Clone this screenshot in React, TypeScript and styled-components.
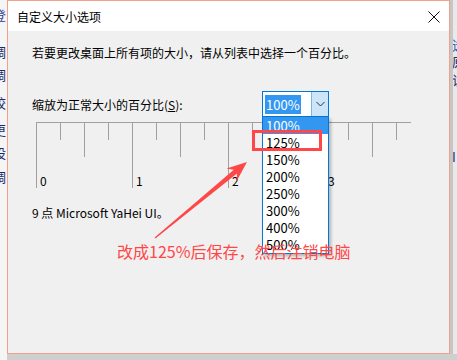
import React from 'react'
import styled, { createGlobalStyle } from 'styled-components'

const GlobalStyle = createGlobalStyle`
   html, body {
      margin: 0;
      padding: 0;
      background: #e6e6e6;
   }
   body {
      font-family: 'Noto Sans CJK SC', 'Noto Sans', sans-serif;
      color: #000;
   }
`

const RED = '#ff4747'
const BLUE = '#0078d7'

const Screen = styled.div`
   position: relative;
   display: flex;
   width: 457px;
   height: 360px;
   overflow: hidden;
   background: #cfcfcf;
`

const SideStrip = styled.div<{ $side: 'left' | 'right' }>`
   position: relative;
   flex: ${(p) => (p.$side === 'left' ? '0 0 7px' : '1 1 auto')};
   height: ${(p) => (p.$side === 'left' ? '360px' : '354px')};
   overflow: hidden;
   background: ${(p) => (p.$side === 'left' ? '#f5f5f5' : '#e9e9e9')};
   border-left: ${(p) => (p.$side === 'right' ? '3px solid #c6c6c6' : 'none')};
`

// fragments of the window lying behind the dialog
const BehindGlyph = styled.span<{ $y: number; $x: number; $color: string }>`
   position: absolute;
   top: ${(p) => p.$y}px;
   left: ${(p) => p.$x}px;
   font-size: 13px;
   line-height: 16px;
   color: ${(p) => p.$color};
   white-space: nowrap;
`

const Window = styled.div`
   flex: 0 0 443px;
   height: 354px;
   box-sizing: border-box;
   display: flex;
   flex-direction: column;
   border: 1px solid #f2a08a;
   background: #f0f0f0;
`

const TitleBar = styled.div`
   height: 30px;
   flex: 0 0 30px;
   display: flex;
   align-items: center;
   justify-content: space-between;
   padding: 0 9px;
   background: #fff;
   font-size: 12px;
`

const CloseButton = styled.div`
   display: flex;
   align-items: center;
   justify-content: center;
   width: 13px;
   height: 13px;
   margin-top: 1px;
`

const Body = styled.div`
   flex: 1;
   padding: 14px 0 0 24px;
   font-size: 12px;
   line-height: 16px;
`

const Intro = styled.div`
   height: 16px;
`

const Row = styled.div`
   display: flex;
   align-items: center;
   height: 26px;
   margin-top: 30px;
`

const Label = styled.div`
   width: 230px;
   margin-top: 1px;
`

const Combo = styled.div`
   position: relative;
   width: 67px;
   height: 26px;
   box-sizing: border-box;
   display: flex;
   border: 1px solid ${BLUE};
   background: #fff;
`

const ComboValue = styled.div`
   flex: 1;
   display: flex;
   align-items: center;
   padding-left: 2px;
`

const Selected = styled.span`
   display: inline-block;
   height: 19px;
   line-height: 19px;
   padding: 0 1px;
   font-size: 13px;
   background: #3397f2;
   color: #fff;
`

const DropButton = styled.div`
   width: 16px;
   display: flex;
   align-items: center;
   justify-content: center;
   background: #cde5f8;
   border-left: 1px solid #7fb6e6;
`

const DropList = styled.ul`
   position: absolute;
   top: 25px;
   left: -1px;
   width: 67px;
   box-sizing: border-box;
   margin: 0;
   padding: 0;
   list-style: none;
   background: #fff;
   border: 1px solid ${BLUE};
   border-top: none;
   box-shadow: 2px 2px 3px rgba(0, 0, 0, 0.25);
   z-index: 2;
`

const DropItem = styled.li<{ $active?: boolean }>`
   height: 17px;
   line-height: 17px;
   padding-left: 3px;
   font-size: 13px;
   background: ${(p) => (p.$active ? '#3397f2' : 'transparent')};
   color: ${(p) => (p.$active ? '#fff' : '#000')};
`

const RulerBox = styled.div`
   width: 375px;
   height: 70px;
   margin: 5px 0 0 4px;
`

const FontNote = styled.div`
   margin-top: 13px;
   font-size: 12px;
`

const Overlay = styled.div`
   position: absolute;
   inset: 0;
   pointer-events: none;
   z-index: 5;
`

const Highlight = styled.div`
   position: absolute;
   left: 252px;
   top: 130px;
   width: 70px;
   height: 21px;
   box-sizing: border-box;
   border: 3px solid ${RED};
`

const Note = styled.div`
   position: absolute;
   left: 117px;
   top: 241px;
   font-size: 16px;
   line-height: 20px;
   color: ${RED};
   white-space: nowrap;
`

const leftGlyphs = [
   { y: 7, ch: '登', color: '#2a3f8f' },
   { y: 44, ch: '调', color: '#1b2a6b' },
   { y: 67, ch: '调', color: '#1b2a6b' },
   { y: 95, ch: '校', color: '#1b2a6b' },
   { y: 122, ch: '更', color: '#1b2a6b' },
   { y: 145, ch: '设', color: '#1b2a6b' },
   { y: 169, ch: '调', color: '#1b2a6b' },
]

const rightGlyphs = [
   { y: 37, ch: '选', color: '#1f5fc0' },
   { y: 54, ch: '原', color: '#1b2a6b' },
   { y: 72, ch: '访', color: '#1b2a6b' },
   { y: 149, ch: 'I', color: '#1b2a6b' },
]

const sizes = ['100%', '125%', '150%', '200%', '250%', '300%', '400%', '500%']

function Ruler() {
   const ticks = Array.from({ length: 16 }, (_, i) => i)
   return (
      <svg width="375" height="70" viewBox="0 0 375 70">
         <line x1="0" y1="0.5" x2="375" y2="0.5" stroke="#a0a0a0" />
         {ticks.map((i) => {
            const x = i * 24 + 0.5
            const len = i % 4 === 0 ? 66 : i % 2 === 0 ? 35 : 18
            return (
               <line key={i} x1={x} y1="0" x2={x} y2={len} stroke="#a0a0a0" />
            )
         })}
         {[0, 1, 2, 3].map((n) => (
            <text
               key={n}
               x={n * 96 + 4}
               y="64"
               fontSize="12"
               fontFamily="'Noto Sans CJK SC', 'Noto Sans', sans-serif"
               fill="#000"
            >
               {n}
            </text>
         ))}
      </svg>
   )
}

export default function App() {
   return (
      <Screen>
         <GlobalStyle />
         <SideStrip $side="left">
            {leftGlyphs.map((g, i) => (
               <BehindGlyph key={i} $y={g.y} $x={-7} $color={g.color}>
                  {g.ch}
               </BehindGlyph>
            ))}
         </SideStrip>
         <Window>
            <TitleBar>
               <span>自定义大小选项</span>
               <CloseButton>
                  <svg width="12" height="12" viewBox="0 0 12 12">
                     <path d="M0.5 0.5 L11.5 11.5 M11.5 0.5 L0.5 11.5" stroke="#111" strokeWidth="1" />
                  </svg>
               </CloseButton>
            </TitleBar>
            <Body>
               <Intro>若要更改桌面上所有项的大小，请从列表中选择一个百分比。</Intro>
               <Row>
                  <Label>
                     缩放为正常大小的百分比(<u>S</u>):
                  </Label>
                  <Combo>
                     <ComboValue>
                        <Selected>100%</Selected>
                     </ComboValue>
                     <DropButton>
                        <svg width="9" height="6" viewBox="0 0 9 6">
                           <path d="M0.5 1 L4.5 5 L8.5 1" fill="none" stroke="#333" strokeWidth="1" />
                        </svg>
                     </DropButton>
                     <DropList>
                        {sizes.map((s, i) => (
                           <DropItem key={s} $active={i === 0}>
                              {s}
                           </DropItem>
                        ))}
                     </DropList>
                  </Combo>
               </Row>
               <RulerBox>
                  <Ruler />
               </RulerBox>
               <FontNote>9 点 Microsoft YaHei UI。</FontNote>
            </Body>
         </Window>
         <SideStrip $side="right">
            {rightGlyphs.map((g, i) => (
               <BehindGlyph key={i} $y={g.y} $x={-1} $color={g.color}>
                  {g.ch}
               </BehindGlyph>
            ))}
         </SideStrip>
         <Overlay>
            <Highlight />
            <svg width="457" height="360" viewBox="0 0 457 360">
               <polygon
                  points="154.6,237.5 233.8,169.7 226.5,168.5 247,162 236.7,180.9 237,173.5 155.4,238.5"
                  fill={RED}
               />
            </svg>
            <Note>改成125%后保存，然后注销电脑</Note>
         </Overlay>
      </Screen>
   )
}
